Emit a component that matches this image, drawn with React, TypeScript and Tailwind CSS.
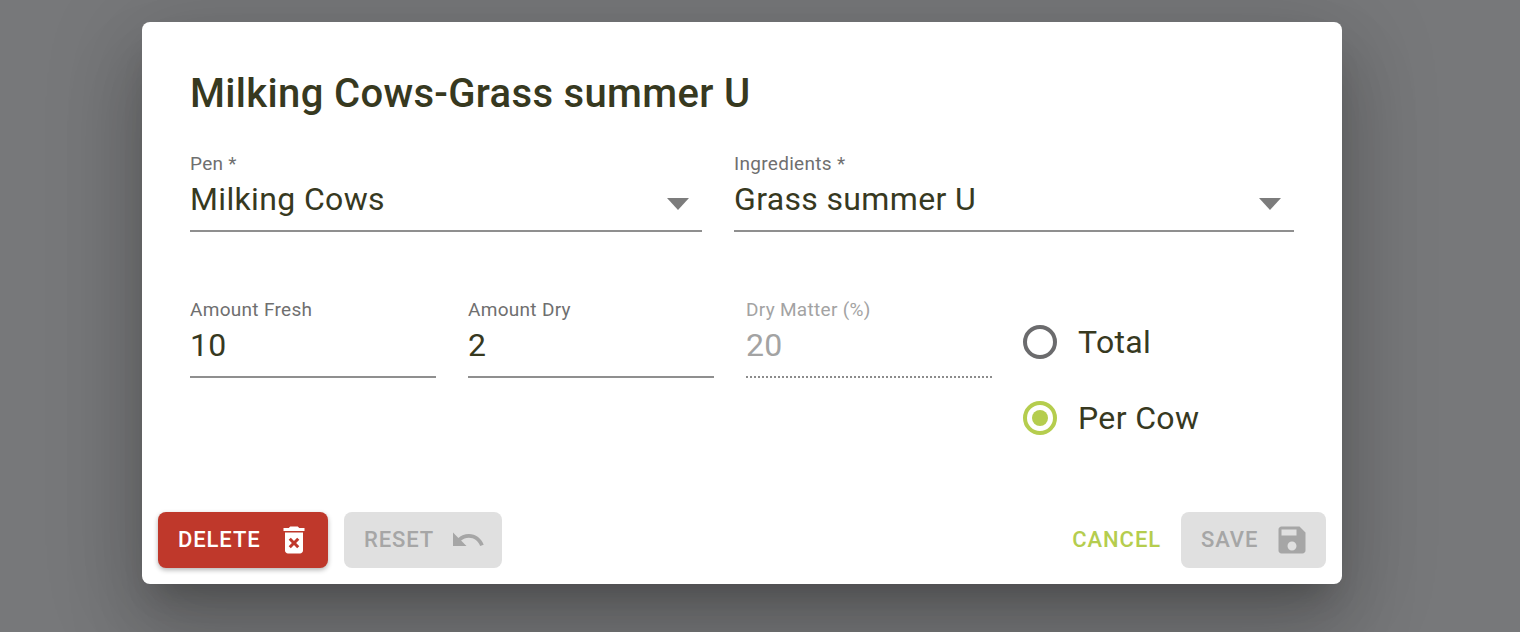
import React from "react";

function Field({ label, value, className, disabled }: { label: string; value: string; className: string; disabled?: boolean }) {
  return (
    <div className={`flex flex-col ${className}`}>
      <div className={`h-[20px] text-[19px] leading-[20px] tracking-[0.3px] ${disabled ? "text-[#a3a3a3]" : "text-[#6f6f6f]"}`}>{label}</div>
      <div className={`mt-[5px] h-[40px] text-[32px] leading-[40px] tracking-[0.35px] ${disabled ? "text-[#a3a3a3]" : "text-[#37391f]"}`}>{value}</div>
      <div className={`mt-[11px] h-[2px] ${disabled ? "border-b-2 border-dotted border-[#8c8c8c]" : "bg-[#8f8f8f]"}`} />
    </div>
  );
}

function Select({ label, value, className }: { label: string; value: string; className: string }) {
  return (
    <div className={`flex flex-col ${className}`}>
      <div className="h-[20px] text-[19px] leading-[20px] tracking-[0.3px] text-[#6f6f6f]">{label}</div>
      <div className="mt-[5px] flex h-[40px] items-center justify-between pr-[13px]">
        <span className="text-[32px] leading-[40px] tracking-[0.35px] text-[#37391f]">{value}</span>
        <svg width="22" height="12" viewBox="0 0 22 12" className="mt-[9px]"><path d="M0 0h22L11 12z" fill="#7c7c7c" /></svg>
      </div>
      <div className="mt-[11px] h-[2px] bg-[#8f8f8f]" />
    </div>
  );
}

function Radio({ label, checked }: { label: string; checked?: boolean }) {
  return (
    <div className="flex h-[40px] items-center gap-[21px]">
      <div className={`flex h-[34px] w-[34px] items-center justify-center rounded-full border-[4px] ${checked ? "border-[#b5cd4e]" : "border-[#6b6b6d]"}`}>
        {checked && <div className="h-[16px] w-[16px] rounded-full bg-[#b5cd4e]" />}
      </div>
      <span className="text-[32px] leading-[40px] tracking-[0.35px] text-[#37391f]">{label}</span>
    </div>
  );
}

function Btn({ label, path, className, gap }: { label: string; path: string; className: string; gap: string }) {
  return (
    <div className={`flex h-[56px] items-center rounded-[8px] text-[22px] font-medium tracking-[0.9px] ${className}`}>
      <span className="pb-[2px]">{label}</span>
      <svg viewBox="0 0 24 24" className={`h-[36px] w-[36px] ${gap}`} fill="currentColor"><path d={path} /></svg>
    </div>
  );
}

export default function App() {
  return (
    <div className="h-[632px] w-[1520px] overflow-hidden bg-[#77787a] pl-[142px] pt-[22px] font-['Roboto',sans-serif]">
      <div className="flex h-[562px] w-[1200px] flex-col rounded-[8px] bg-white shadow-[0_22px_30px_-14px_rgba(0,0,0,0.2),0_48px_76px_6px_rgba(0,0,0,0.14),0_18px_92px_16px_rgba(0,0,0,0.12)]">
        <div className="flex-1 px-[48px] pt-[47px]">
          <h1 className="h-[50px] text-[40px] font-medium leading-[50px] tracking-[0.33px] text-[#37391f]">Milking Cows-Grass summer U</h1>
          <div className="mt-[35px] flex gap-[32px]">
            <Select label="Pen *" value="Milking Cows" className="w-[512px]" />
            <Select label="Ingredients *" value="Grass summer U" className="w-[560px]" />
          </div>
          <div className="mt-[68px] flex gap-[32px]">
            <Field label="Amount Fresh" value="10" className="w-[246px]" />
            <Field label="Amount Dry" value="2" className="w-[246px]" />
            <Field label="Dry Matter (%)" value="20" className="w-[246px]" disabled />
            <div className="-ml-[1px] mt-[22px] flex flex-col gap-[36px]">
              <Radio label="Total" />
              <Radio label="Per Cow" checked />
            </div>
          </div>
        </div>
        <div className="flex items-center px-[16px] pb-[16px]">
          <Btn
            label="DELETE"
            className="w-[170px] bg-[#bf382b] pl-[20px] text-white shadow-[0_2px_5px_rgba(0,0,0,0.3)]"
            gap="ml-[15px]"
            path="M6 19c0 1.1.9 2 2 2h8c1.1 0 2-.9 2-2V7H6v12zm2.46-7.12l1.41-1.41L12 12.59l2.12-2.12 1.41 1.41L13.41 14l2.12 2.12-1.41 1.41L12 15.41l-2.12 2.12-1.41-1.41L10.59 14l-2.13-2.12zM15.5 4l-1-1h-5l-1 1H5v2h14V4z"
          />
          <Btn
            label="RESET"
            className="ml-[16px] w-[158px] bg-[#e0e0e0] pl-[20px] text-[#a6a6a6]"
            gap="ml-[16px]"
            path="M12.5 8c-2.65 0-5.05.99-6.9 2.6L2 7v9h9l-3.62-3.62c1.39-1.16 3.16-1.88 5.12-1.88 3.54 0 6.55 2.31 7.6 5.5l2.37-.78C21.08 11.03 17.15 8 12.5 8z"
          />
          <span className="ml-auto pb-[2px] text-[22px] font-medium tracking-[0.9px] text-[#b5cd4e]">CANCEL</span>
          <Btn
            label="SAVE"
            className="ml-[20px] w-[145px] bg-[#e0e0e0] pl-[20px] text-[#a6a6a6]"
            gap="ml-[16px]"
            path="M17 3H5c-1.11 0-2 .9-2 2v14c0 1.1.89 2 2 2h14c1.1 0 2-.9 2-2V7l-4-4zm-5 16c-1.66 0-3-1.34-3-3s1.34-3 3-3 3 1.34 3 3-1.34 3-3 3zm3-10H5V5h10v4z"
          />
        </div>
      </div>
    </div>
  );
}
